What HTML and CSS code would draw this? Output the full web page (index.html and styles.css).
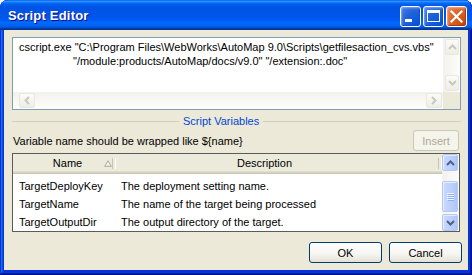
FILE: index.html
```html
<!DOCTYPE html>
<html>
<head>
<meta charset="utf-8">
<title>Script Editor</title>
<link rel="stylesheet" href="styles.css">
</head>
<body>
<div class="window">
  <div class="titlebar">
    <span class="title">Script Editor</span>
    <div class="tb-buttons">
      <div class="tb-btn blue">
        <svg width="21" height="21" viewBox="0 0 21 21"><rect x="5" y="13" width="7" height="3" fill="#fff"/></svg>
      </div>
      <div class="tb-btn blue">
        <svg width="21" height="21" viewBox="0 0 21 21"><rect x="4.5" y="4.5" width="12" height="11" fill="none" stroke="#fff" stroke-width="1"/><rect x="4" y="4" width="13" height="3" fill="#fff"/></svg>
      </div>
      <div class="tb-btn red">
        <svg width="21" height="21" viewBox="0 0 21 21"><path d="M5.5 5.5 L15.5 15.5 M15.5 5.5 L5.5 15.5" stroke="#fff" stroke-width="2.2" stroke-linecap="square"/></svg>
      </div>
    </div>
  </div>
  <div class="client">
    <div class="editor">
      <div class="editor-top">
        <div class="editor-text">
          <div class="code-line">cscript.exe "C:\Program Files\WebWorks\AutoMap 9.0\Scripts\getfilesaction_cvs.vbs"</div>
          <div class="code-line indent">"/module:products/AutoMap/docs/v9.0" "/extension:.doc"</div>
        </div>
        <div class="vscroll dis">
          <div class="sb-btn dis-btn"><svg width="9" height="6" viewBox="0 0 9 6"><path d="M1 5 L4.5 1.5 L8 5" fill="none" stroke="#c9c7bf" stroke-width="2"/></svg></div>
          <div class="sb-track"></div>
          <div class="sb-btn dis-btn"><svg width="9" height="6" viewBox="0 0 9 6"><path d="M1 1 L4.5 4.5 L8 1" fill="none" stroke="#c9c7bf" stroke-width="2"/></svg></div>
        </div>
      </div>
      <div class="editor-bottom">
        <div class="hscroll dis">
          <div class="sb-hbtn dis-btn"><svg width="6" height="9" viewBox="0 0 6 9"><path d="M5 1 L1.5 4.5 L5 8" fill="none" stroke="#c9c7bf" stroke-width="2"/></svg></div>
          <div class="sb-track"></div>
          <div class="sb-hbtn dis-btn"><svg width="6" height="9" viewBox="0 0 6 9"><path d="M1 1 L4.5 4.5 L1 8" fill="none" stroke="#c9c7bf" stroke-width="2"/></svg></div>
        </div>
        <div class="corner"></div>
      </div>
    </div>

    <div class="group">
      <span class="group-line left"></span>
      <span class="group-title">Script Variables</span>
      <span class="group-line"></span>
    </div>

    <div class="hint-row">
      <span class="hint">Variable name should be wrapped like ${name}</span>
      <button class="btn insert" disabled>Insert</button>
    </div>

    <div class="list">
      <div class="list-main">
        <div class="header">
          <div class="hcell col-name">
            <span>Name</span>
            <svg class="sort" width="8" height="7" viewBox="0 0 8 7"><path d="M4 0.8 L7.3 6.3 L0.7 6.3 Z" fill="#f4f3ee" stroke="#aca899" stroke-width="1"/></svg>
          </div>
          <div class="hcell col-desc"><span>Description</span></div>
        </div>
        <div class="rows">
          <div class="row"><span class="c-name">TargetDeployKey</span><span class="c-desc">The deployment setting name.</span></div>
          <div class="row"><span class="c-name">TargetName</span><span class="c-desc">The name of the target being processed</span></div>
          <div class="row"><span class="c-name">TargetOutputDir</span><span class="c-desc">The output directory of the target.</span></div>
        </div>
      </div>
      <div class="vscroll blue-sb">
        <div class="sb-btn blue-btn"><svg width="9" height="6" viewBox="0 0 9 6"><path d="M1 5 L4.5 1.5 L8 5" fill="none" stroke="#4d6185" stroke-width="2"/></svg></div>
        <div class="sb-track blue-track">
          <div class="thumb">
            <svg width="7" height="8" viewBox="0 0 7 8"><path d="M0 0.5 H7 M0 2.5 H7 M0 4.5 H7 M0 6.5 H7" stroke="#eef3fe" stroke-width="1"/><path d="M1 1.5 H7 M1 3.5 H7 M1 5.5 H7 M1 7.5 H7" stroke="#8cb0f8" stroke-width="1"/></svg>
          </div>
        </div>
        <div class="sb-btn blue-btn"><svg width="9" height="6" viewBox="0 0 9 6"><path d="M1 1 L4.5 4.5 L8 1" fill="none" stroke="#4d6185" stroke-width="2"/></svg></div>
      </div>
    </div>

    <div class="actions">
      <button class="btn action">OK</button>
      <button class="btn action">Cancel</button>
    </div>
  </div>
</div>
</body>
</html>
```

FILE: styles.css
```css
* { box-sizing: border-box; }

html, body {
  margin: 0;
  padding: 0;
  background: #ffffff;
}

body {
  font-family: "Liberation Sans", Arial, sans-serif;
  font-size: 11px;
  color: #000;
}

.window {
  width: 472px;
  height: 275px;
  display: flex;
  flex-direction: column;
  background: #0831d9;
  border-radius: 8px 8px 0 0;
  box-shadow: inset -1px -1px #00138c, inset 1px 1px #0831d9, inset -2px -2px #001ea0, inset 2px 2px #166aee, inset -3px -3px #003bda, inset 3px 3px #0855dd;
  overflow: hidden;
}

.titlebar {
  height: 30px;
  flex: none;
  display: flex;
  align-items: center;
  justify-content: space-between;
  padding: 0 5px 0 8px;
  border-radius: 8px 8px 0 0;
  background: linear-gradient(to bottom, #0058ee 0%, #3593ff 4%, #288eff 6%, #127dff 8%, #036ffc 10%, #0262ee 14%, #0057e5 20%, #0054e3 24%, #0055eb 56%, #005bf5 66%, #026afe 76%, #0062ef 86%, #0052d6 92%, #0040ab 94%, #003092 100%);
}

.title {
  font-family: "Liberation Sans", Arial, sans-serif;
  font-weight: bold;
  font-size: 13px;
  color: #fff;
  text-shadow: 1px 1px #0f1089;
  letter-spacing: 0.2px;
  padding-top: 1px;
}

.tb-buttons {
  display: flex;
  gap: 2px;
  padding-top: 2px;
}

.tb-btn {
  width: 21px;
  height: 21px;
  border: 1px solid #fff;
  border-radius: 3px;
  display: flex;
  align-items: center;
  justify-content: center;
  overflow: hidden;
}

.tb-btn svg { display: block; margin: -1px; }

.tb-btn.blue {
  background: radial-gradient(circle at 90% 90%, #0054e9 0%, #2263d5 55%, #4480f5 100%);
  box-shadow: inset -1px -1px 1px #1d4bc0, inset 1px 1px 2px #7aa6ff;
}

.tb-btn.red {
  background: radial-gradient(circle at 90% 90%, #cc4600 0%, #dc6527 55%, #e5855c 100%);
  box-shadow: inset -1px -1px 1px #a93411, inset 1px 1px 2px #f4a584;
}

.client {
  flex: 1;
  margin: 0 4px 5px 4px;
  background: #ece9d8;
  padding: 7px 7px 0 8px;
  display: flex;
  flex-direction: column;
}

/* text editor */
.editor {
  height: 73px;
  border: 1px solid #7f9db9;
  background: #fff;
  display: flex;
  flex-direction: column;
}

.editor-top {
  flex: 1;
  display: flex;
  min-height: 0;
}

.editor-text {
  flex: 1;
  padding: 2px 0 0 6px;
  white-space: nowrap;
  overflow: hidden;
}

.code-line {
  height: 14px;
  line-height: 14px;
}

.code-line.indent { padding-left: 54px; }

.vscroll {
  width: 17px;
  flex: none;
  display: flex;
  flex-direction: column;
}

.vscroll.dis {
  background: linear-gradient(to right, #f3f1ec, #fdfdfa);
}

.sb-btn {
  height: 17px;
  flex: none;
  display: flex;
  align-items: center;
  justify-content: center;
}

.sb-track { flex: 1; }

.dis-btn {
  border: 1px solid #e8e7e0;
  border-radius: 2px;
  background: linear-gradient(to bottom, #fbfbf8, #eeede5);
}

.vscroll.dis .sb-btn { margin: 1px 1px 1px 2px; height: 16px; }

.editor-bottom {
  height: 17px;
  flex: none;
  display: flex;
}

.hscroll {
  flex: 1;
  display: flex;
  padding-left: 6px;
}

.hscroll.dis {
  background: linear-gradient(to bottom, #f3f1ec, #fdfdfa);
}

.sb-hbtn {
  width: 16px;
  margin: 1px 1px 1px 0;
  display: flex;
  align-items: center;
  justify-content: center;
}

.corner {
  width: 17px;
  background: #ece9d8;
}

/* group separator */
.group {
  margin-top: 4px;
  height: 14px;
  display: flex;
  align-items: center;
  gap: 4px;
}

.group-line {
  flex: 1;
  height: 1px;
  background: #d0d0bf;
}

.group-line.left {
  flex: none;
  width: 167px;
}

.group-title {
  color: #0046d5;
  line-height: 14px;
}

/* hint row */
.hint-row {
  margin-top: 2px;
  height: 21px;
  display: flex;
  align-items: center;
  justify-content: space-between;
  padding-left: 1px;
}

.btn {
  font-family: "Liberation Sans", Arial, sans-serif;
  font-size: 11px;
  padding: 0;
  margin: 0;
  border-radius: 3px;
}

.insert {
  width: 46px;
  height: 21px;
  border: 1px solid #c9c7ba;
  background: #f5f4ea;
  color: #aca899;
  margin-right: 2px;
}

/* list view */
.list {
  margin-top: 2px;
  height: 79px;
  border: 1px solid #5b5b5b;
  background: #fff;
  display: flex;
  margin-right: 1px;
}

.list-main {
  flex: 1;
  display: flex;
  flex-direction: column;
  overflow: hidden;
}

.header {
  height: 20px;
  flex: none;
  display: flex;
  background: #ebeadb;
  box-shadow: inset 0 -1px #cbc7b8, inset 0 -2px #d6d2c2, inset 0 -3px #e2decd;
}

.hcell {
  height: 100%;
  display: flex;
  align-items: center;
  padding-bottom: 2px;
  position: relative;
}

.col-name {
  width: 103px;
  justify-content: center;
  padding-left: 6px;
}

.col-name::after, .col-desc::after {
  content: "";
  position: absolute;
  right: 0;
  top: 4px;
  bottom: 5px;
  width: 2px;
  border-left: 1px solid #c7c5b2;
  border-right: 1px solid #fff;
}

.sort {
  position: absolute;
  right: 4px;
  top: 6px;
}

.col-desc {
  flex: 1;
  padding-left: 121px;
}

.rows {
  padding-top: 3px;
}

.row {
  height: 18px;
  display: flex;
  align-items: center;
}

.c-name {
  width: 103px;
  padding-left: 6px;
}

.c-desc {
  padding-left: 5px;
}

.blue-sb {
  background: #fbfbf8;
  padding: 0;
}

.blue-btn, .thumb {
  border: 1px solid #b4c8f6;
  border-radius: 2px;
  background: linear-gradient(to right, #cad8fd, #bacffa 60%, #b0c6f8);
  box-shadow: inset 1px 1px #e4ecfe;
}

.blue-sb .sb-btn { height: 17px; margin: 0 1px 0 0; }

.blue-track {
  display: flex;
  flex-direction: column;
  padding: 10px 1px 1px 0;
  background: linear-gradient(to right, #f1f1ed, #fcfcfa);
}

.thumb {
  height: 31px;
  display: flex;
  align-items: center;
  justify-content: center;
}

/* bottom buttons */
.actions {
  margin-top: 10px;
  display: flex;
  justify-content: flex-end;
  gap: 7px;
  margin-right: -1px;
}

.action {
  width: 73px;
  height: 21px;
  border: 1px solid #003c74;
  background: linear-gradient(to bottom, #ffffff 0%, #f5f4f0 60%, #e3e1d6 100%);
  color: #000;
}
```
